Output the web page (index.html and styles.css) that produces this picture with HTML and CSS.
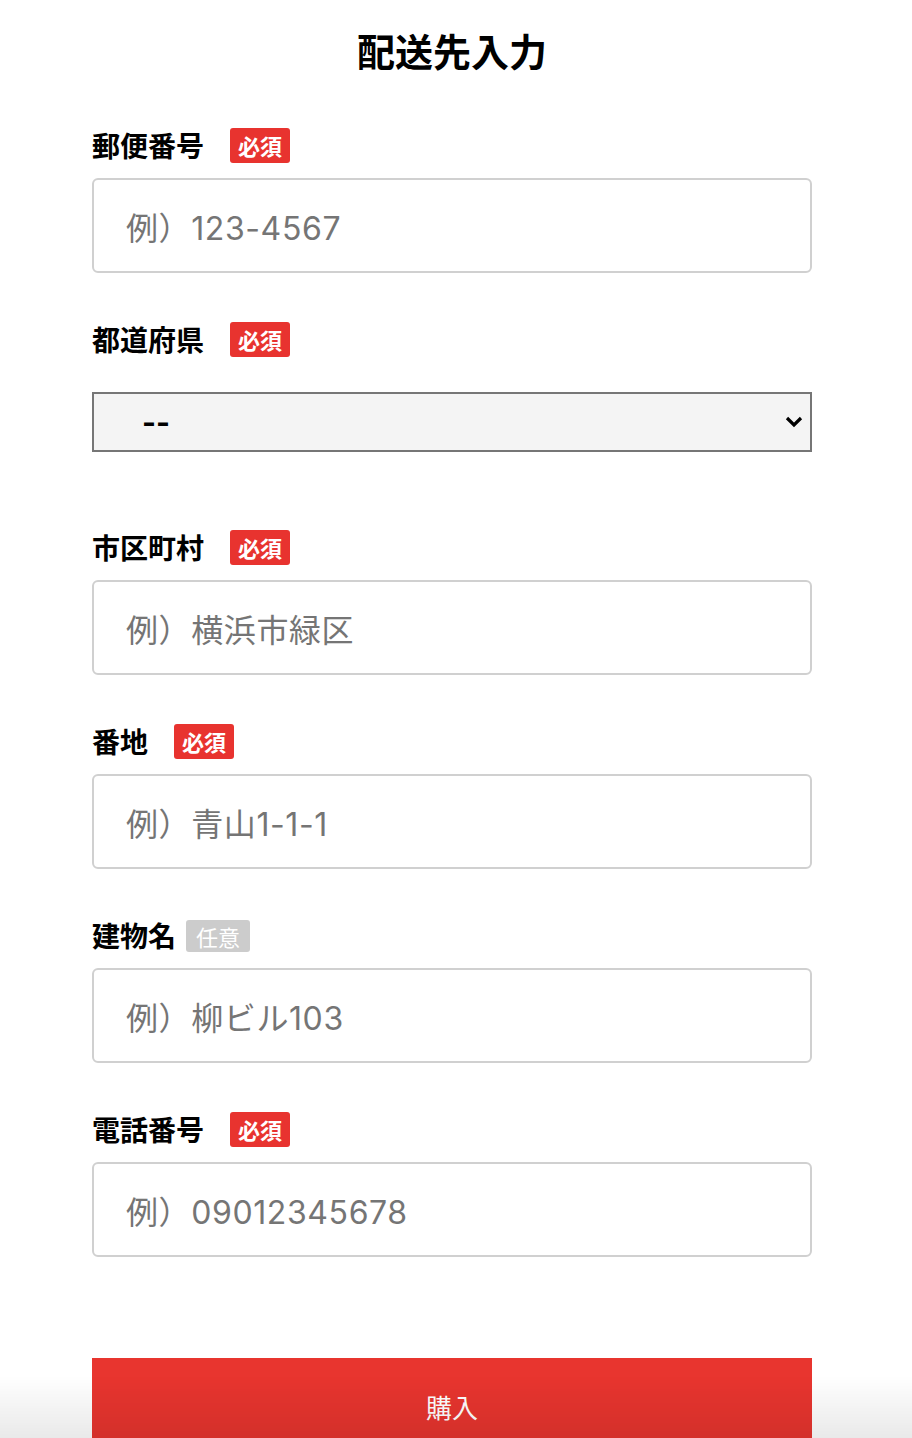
FILE: index.html
```html
<!DOCTYPE html>
<html lang="ja">
<head>
<meta charset="utf-8">
<title>配送先入力</title>
<link rel="stylesheet" href="styles.css">
</head>
<body>
<main class="page">
  <h1 class="title">配送先入力</h1>
  <form class="form">
    <div class="field">
      <div class="label-row"><span class="label">郵便番号</span><span class="badge required">必須</span></div>
      <input class="text-input" type="text" placeholder="例）123-4567">
    </div>
    <div class="field field-select">
      <div class="label-row"><span class="label">都道府県</span><span class="badge required">必須</span></div>
      <div class="select-wrap">
        <select class="select"><option>--</option></select>
        <svg class="chevron" width="18" height="12" viewBox="0 0 18 12"><path d="M2 2 L9 9 L16 2" fill="none" stroke="#000" stroke-width="3.2"/></svg>
      </div>
    </div>
    <div class="field">
      <div class="label-row"><span class="label">市区町村</span><span class="badge required">必須</span></div>
      <input class="text-input" type="text" placeholder="例）横浜市緑区">
    </div>
    <div class="field">
      <div class="label-row"><span class="label">番地</span><span class="badge required">必須</span></div>
      <input class="text-input" type="text" placeholder="例）青山1-1-1">
    </div>
    <div class="field">
      <div class="label-row"><span class="label">建物名</span><span class="badge optional">任意</span></div>
      <input class="text-input" type="text" placeholder="例）柳ビル103">
    </div>
    <div class="field">
      <div class="label-row"><span class="label">電話番号</span><span class="badge required">必須</span></div>
      <input class="text-input" type="text" placeholder="例）09012345678">
    </div>
    <button class="buy" type="button">購入</button>
  </form>
</main>
<div class="fade"></div>
</body>
</html>
```
FILE: styles.css
```css
html, body {
  margin: 0;
  padding: 0;
  background: #fff;
}
body {
  font-family: "Noto Sans CJK JP", "Noto Sans", sans-serif;
  color: #000;
}
.page {
  width: 720px;
  padding-left: 92px;
}
.title {
  margin: 0;
  height: 100px;
  line-height: 100px;
  font-size: 38px;
  font-weight: 700;
  text-align: center;
}
.form {
  display: flex;
  flex-direction: column;
  padding-top: 28px;
}
.field {
  display: flex;
  flex-direction: column;
  gap: 15px;
  margin-bottom: 49px;
}
.field-select {
  gap: 35px;
  margin-bottom: 78px;
}
.label-row {
  display: flex;
  align-items: center;
  height: 35px;
}
.label {
  font-size: 28px;
  font-weight: 700;
  line-height: 35px;
}
.badge {
  display: inline-block;
  border-radius: 3px;
  color: #fff;
  font-size: 22px;
}
.required {
  background: #e8332f;
  font-weight: 700;
  line-height: 27px;
  padding: 4px 8px;
  margin-left: 26px;
}
.optional {
  background: #cccccc;
  font-weight: 400;
  line-height: 26px;
  padding: 3px 10px;
  margin-left: 10px;
}
.text-input {
  box-sizing: border-box;
  width: 720px;
  height: 95px;
  border: 2px solid #d0d0d0;
  border-radius: 6px;
  padding: 6px 32px 0;
  font-family: "Inter", "Noto Sans CJK JP", sans-serif;
  font-size: 32px;
  letter-spacing: 0.6px;
  color: #333;
  background: #fff;
  outline: none;
}
.text-input::placeholder {
  color: #757575;
}
.select-wrap {
  position: relative;
  width: 720px;
  height: 60px;
}
.select {
  -webkit-appearance: none;
  appearance: none;
  box-sizing: border-box;
  width: 720px;
  height: 60px;
  border: 2px solid #767676;
  border-radius: 0;
  background: #f4f4f4;
  padding: 0 0 0 48px;
  font-family: "Inter", "Noto Sans CJK JP", sans-serif;
  font-size: 30px;
  font-weight: 700;
  color: #000;
  outline: none;
}
.chevron {
  position: absolute;
  right: 9px;
  top: 24px;
  pointer-events: none;
}
.buy {
  margin-top: 52px;
  width: 720px;
  height: 100px;
  padding: 0 0 4px;
  border: 0;
  background: #e8352f;
  color: #fff;
  font-family: inherit;
  font-size: 26px;
  font-weight: 400;
  cursor: pointer;
}
.fade {
  position: fixed;
  left: 0;
  right: 0;
  bottom: 0;
  height: 62px;
  background: linear-gradient(to bottom, rgba(0,0,0,0), rgba(0,0,0,0.085));
  pointer-events: none;
}
```
